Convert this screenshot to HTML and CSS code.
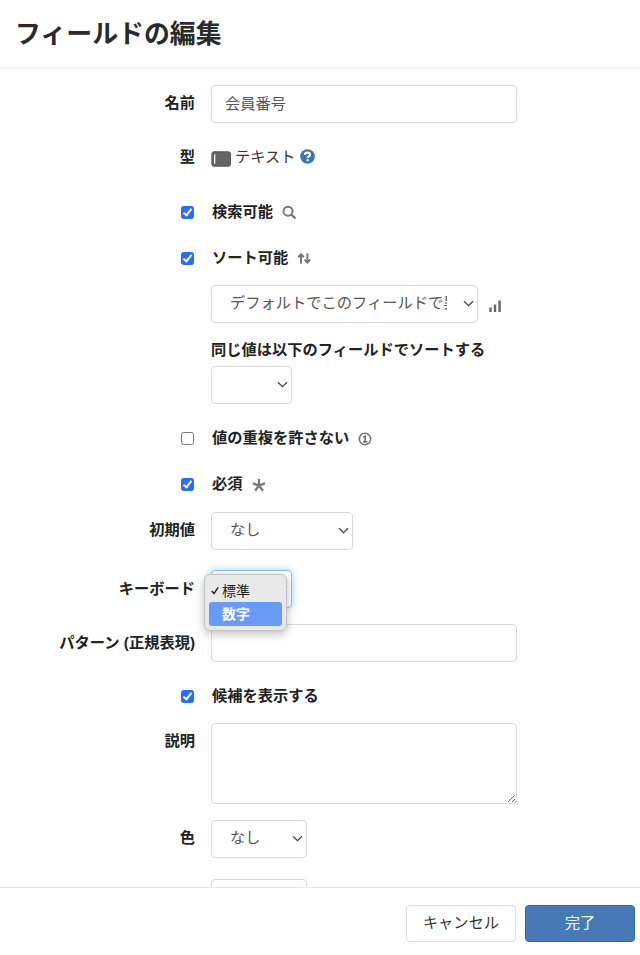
FILE: index.html
```html
<!DOCTYPE html>
<html lang="ja">
<head>
    <meta charset="UTF-8">
    <meta name="viewport" content="width=device-width, initial-scale=1.0">
    <title>フィールドの編集</title>
    <link rel="stylesheet" href="styles.css">
</head>
<body>
    <svg class="symbols" width="0" height="0">
        <symbol id="chevron" viewBox="0 0 11 7">
            <path d="M1 1.2 5.5 5.6 10 1.2" fill="none" stroke="#444" stroke-width="1.3"/>
        </symbol>
    </svg>

    <div class="modal">
        <div class="modal-header">
            <h1>フィールドの編集</h1>
        </div>

        <form class="modal-body">
            <div class="row name">
                <label for="name">名前</label>
                <input type="text" class="form-control" id="name" value="会員番号">
            </div>

            <div class="row type">
                <label>型</label>
                <div class="static">
                    <svg class="type-icon" width="20" height="16" viewBox="0 0 20 16">
                        <rect x=".9" y=".8" width="18.6" height="14.4" rx="2" fill="#666" stroke="#555"/>
                        <path d="M3.7 3.2v9.6" stroke="#fff" stroke-width="1.2"/>
                    </svg>
                    <span>テキスト</span>
                    <svg class="help-icon" width="15" height="15" viewBox="0 0 15 15">
                        <circle cx="7.5" cy="7.5" r="7.3" fill="#3c74b5"/>
                        <path d="M5 5.8C5 3 10 2.9 10 5.7 10 7.5 7.6 7.2 7.6 9.1" fill="none" stroke="#fff" stroke-width="2.2"/>
                        <path d="M6.5 10.2h2.2v2H6.5z" fill="#fff"/>
                    </svg>
                </div>
            </div>

            <div class="row check searchable">
                <input type="checkbox" id="searchable" checked>
                <label for="searchable">検索可能</label>
                <svg class="icon" width="15" height="15" viewBox="0 0 15 15" fill="none" stroke="#777">
                    <circle cx="6" cy="6.2" r="4.5" stroke-width="1.9"/>
                    <path d="M9.3 9.5 13.4 13.4" stroke-width="2.4"/>
                </svg>
            </div>

            <div class="row check sortable">
                <input type="checkbox" id="sortable" checked>
                <label for="sortable">ソート可能</label>
                <svg class="icon" width="15" height="15" viewBox="0 0 15 15" fill="none" stroke="#777" stroke-width="2">
                    <path d="M4 12.6V3.5M1.1 6.2 4 3.2 6.9 6.2"/>
                    <path d="M10.4 2.2v9.4M7.5 8.6l2.9 3 2.9-3"/>
                </svg>
            </div>

            <div class="row sort-order">
                <div class="select wide">
                    <select class="form-control"><option>デフォルトでこのフィールドで昇順ソート</option></select>
                    <svg class="chevron" width="11" height="7"><use href="#chevron"/></svg>
                </div>
                <svg class="bars-icon" width="12" height="12" viewBox="0 0 12 12" fill="#666">
                    <path d="M.3 7.6h2.4V12H.3zM4.8 4.4h2.4V12H4.8zM9.4.6h2.4V12H9.4z"/>
                </svg>
            </div>

            <div class="row then-by-label">
                <label for="thenBy">同じ値は以下のフィールドでソートする</label>
            </div>

            <div class="row then-by">
                <div class="select small">
                    <select class="form-control" id="thenBy"><option></option></select>
                    <svg class="chevron" width="11" height="7"><use href="#chevron"/></svg>
                </div>
            </div>

            <div class="row check unique">
                <input type="checkbox" id="unique">
                <label for="unique">値の重複を許さない</label>
                <svg class="icon" width="14" height="14" viewBox="0 0 14 14" fill="none" stroke="#777">
                    <circle cx="7" cy="7" r="5.7" stroke-width="1.6"/>
                    <path d="M5 5.2 7.2 4.2V10M5 9.8h4.4" stroke-width="1.7"/>
                </svg>
            </div>

            <div class="row check required">
                <input type="checkbox" id="required" checked>
                <label for="required">必須</label>
                <svg class="icon" width="14" height="14" viewBox="0 0 14 14" stroke="#777" stroke-width="2.3">
                    <path d="M7 7.5V1M7 7.5 1 5.4M7 7.5l6-2.1M7 7.5 3.1 12.8M7 7.5l3.9 5.3"/>
                </svg>
            </div>

            <div class="row default">
                <label for="default">初期値</label>
                <div class="select medium">
                    <select class="form-control" id="default"><option>なし</option></select>
                    <svg class="chevron" width="11" height="7"><use href="#chevron"/></svg>
                </div>
            </div>

            <div class="row keyboard">
                <label for="keyboard">キーボード</label>
                <div class="select small focused">
                    <select class="form-control" id="keyboard"><option></option></select>
                    <svg class="chevron" width="11" height="7"><use href="#chevron"/></svg>
                    <div class="menu">
                        <div class="menu-item">
                            <svg width="8" height="9" viewBox="0 0 8 9"><path d="M.8 5 3 7.6 7.2 1.4" fill="none" stroke="#222" stroke-width="1.5"/></svg>
                            <span>標準</span>
                        </div>
                        <div class="menu-item active"><span>数字</span></div>
                    </div>
                </div>
            </div>

            <div class="row pattern">
                <label for="pattern">パターン (正規表現)</label>
                <input type="text" class="form-control" id="pattern">
            </div>

            <div class="row check suggest">
                <input type="checkbox" id="suggest" checked>
                <label for="suggest">候補を表示する</label>
            </div>

            <div class="row description">
                <label for="description">説明</label>
                <textarea class="form-control" id="description"></textarea>
            </div>

            <div class="row color">
                <label for="color">色</label>
                <div class="select color-select">
                    <select class="form-control" id="color"><option>なし</option></select>
                    <svg class="chevron" width="11" height="7"><use href="#chevron"/></svg>
                </div>
            </div>

            <div class="row">
                <div class="select color-select">
                    <select class="form-control"><option></option></select>
                </div>
            </div>
        </form>

        <div class="modal-footer">
            <button type="button" class="btn">キャンセル</button>
            <button type="button" class="btn btn-primary">完了</button>
        </div>
    </div>
</body>
</html>
```
FILE: styles.css
```css
*, *::after {
    margin: 0;
    padding: 0;
    box-sizing: border-box;
}

body {
    font-family: "Liberation Sans", "Noto Sans CJK JP", sans-serif;
    font-size: 15.25px;
    line-height: 20px;
    color: #333;
    background: #fff;
}

svg {
    display: block;
    flex-shrink: 0;
}

.symbols {
    position: absolute;
}

.modal {
    display: flex;
    flex-direction: column;
    height: 955px;
    overflow: hidden;
}

.modal-header {
    height: 69px;
    padding: 16px 15px 0;
    border-bottom: 2px solid #f1f1f1;
    flex-shrink: 0;
}

h1 {
    font-size: 25.9px;
    line-height: 36px;
    font-weight: bold;
    color: #2a2a2a;
}

.modal-body {
    flex: 1;
    min-height: 0;
    padding-top: 16px;
    overflow: hidden;
}

.row {
    display: flex;
    align-items: center;
    height: 38px;
    padding-left: 211px;
}

.row > label {
    font-weight: bold;
    color: #222;
    white-space: nowrap;
    margin-top: -1px;
}

.row > label:first-child:not(:only-child) {
    width: 195px;
    margin-left: -211px;
    margin-right: 16px;
    text-align: right;
    flex-shrink: 0;
}

.row.name {
    margin-bottom: 15px;
}

.row.name > label {
    margin-top: -2px;
}

.row.type {
    margin-bottom: 16px;
}

.row.check {
    height: 40px;
    margin-bottom: 6px;
    padding-left: 181px;
}

.row.sortable {
    margin-bottom: 7px;
}

.row.sort-order {
    margin-bottom: 17px;
}

.row.then-by-label {
    height: 20px;
    margin-bottom: 6px;
}

.row.then-by {
    margin-bottom: 14px;
}

.row.required {
    margin-bottom: 8px;
}

.row.default {
    margin-bottom: 20px;
}

.row.default > label {
    margin-top: -2px;
}

.row.keyboard {
    margin-bottom: 16px;
}

.row.pattern {
    margin-bottom: 14px;
}

.row.suggest {
    margin-bottom: 7px;
}

.row.description {
    height: 81px;
    align-items: flex-start;
    margin-bottom: 16px;
}

.row.description > label {
    margin-top: 8px;
}

.row.color {
    margin-bottom: 21px;
}

.row.color > label {
    margin-top: -2px;
}

.static {
    display: flex;
    align-items: center;
}

.type-icon {
    margin: 3px 4px 0 0;
}

.help-icon {
    margin: -2px 0 0 4px;
}

.icon {
    margin: 1px 0 0 9px;
}

.bars-icon {
    margin: 3px 0 0 11px;
}

.form-control {
    display: block;
    width: 306px;
    height: 38px;
    padding: 0 14px 4px 13px;
    font: inherit;
    color: #555;
    background: #fff;
    border: 1.5px solid #d8d8d8;
    border-radius: 4px;
    outline: none;
}

textarea.form-control {
    height: 81px;
    resize: both;
}

.select {
    position: relative;
}

.select .form-control {
    appearance: none;
    width: 100%;
    padding: 0 30px 2px 18px;
}

.chevron {
    position: absolute;
    right: 4px;
    top: 15px;
}

.wide {
    width: 267px;
}

.small {
    width: 81px;
}

.medium {
    width: 142px;
}

.color-select {
    width: 96px;
}

.focused .form-control {
    border-color: #8dbdec;
    box-shadow: 0 0 8px rgba(102, 175, 233, 0.5);
}

input[type="checkbox"] {
    appearance: none;
    display: block;
    width: 13px;
    height: 13px;
    margin-right: 18px;
    border: 1px solid #767676;
    border-radius: 2.5px;
    flex-shrink: 0;
}

input[type="checkbox"]:checked {
    background: #286ef5;
    border-color: #286ef5;
}

input[type="checkbox"]:checked::after {
    content: '';
    display: block;
    width: 5px;
    height: 9px;
    margin: 0 0 0 3px;
    border: solid #fff;
    border-width: 0 2px 2px 0;
    transform: rotate(38deg);
}

.menu {
    position: absolute;
    top: 4px;
    left: -7px;
    z-index: 1;
    width: 83px;
    height: 57px;
    padding: 4px;
    background: #e9e9e9;
    border: 1px solid #c4c4c4;
    border-radius: 6px;
    box-shadow: 0 3px 10px rgba(0, 0, 0, 0.25);
    font-size: 14px;
    color: #222;
}

.menu-item {
    display: flex;
    align-items: center;
    gap: 3px;
    height: 23px;
    padding-left: 2px;
}

.menu-item.active {
    height: 24px;
    padding-left: 13px;
    color: #fff;
    font-weight: bold;
    background: #679bf7;
    border-radius: 3px;
}

.modal-footer {
    display: flex;
    justify-content: flex-end;
    gap: 9px;
    height: 68px;
    padding: 17px 5px 0 0;
    border-top: 1px solid #e8e8e8;
    background: #fff;
    flex-shrink: 0;
}

.btn {
    width: 110px;
    height: 37px;
    padding-bottom: 1px;
    font: inherit;
    color: #333;
    background: #fff;
    border: 1.5px solid #dcdcdc;
    border-radius: 4px;
}

.btn-primary {
    color: #fff;
    background: #4679b5;
    border-color: #2f67aa;
}
```
